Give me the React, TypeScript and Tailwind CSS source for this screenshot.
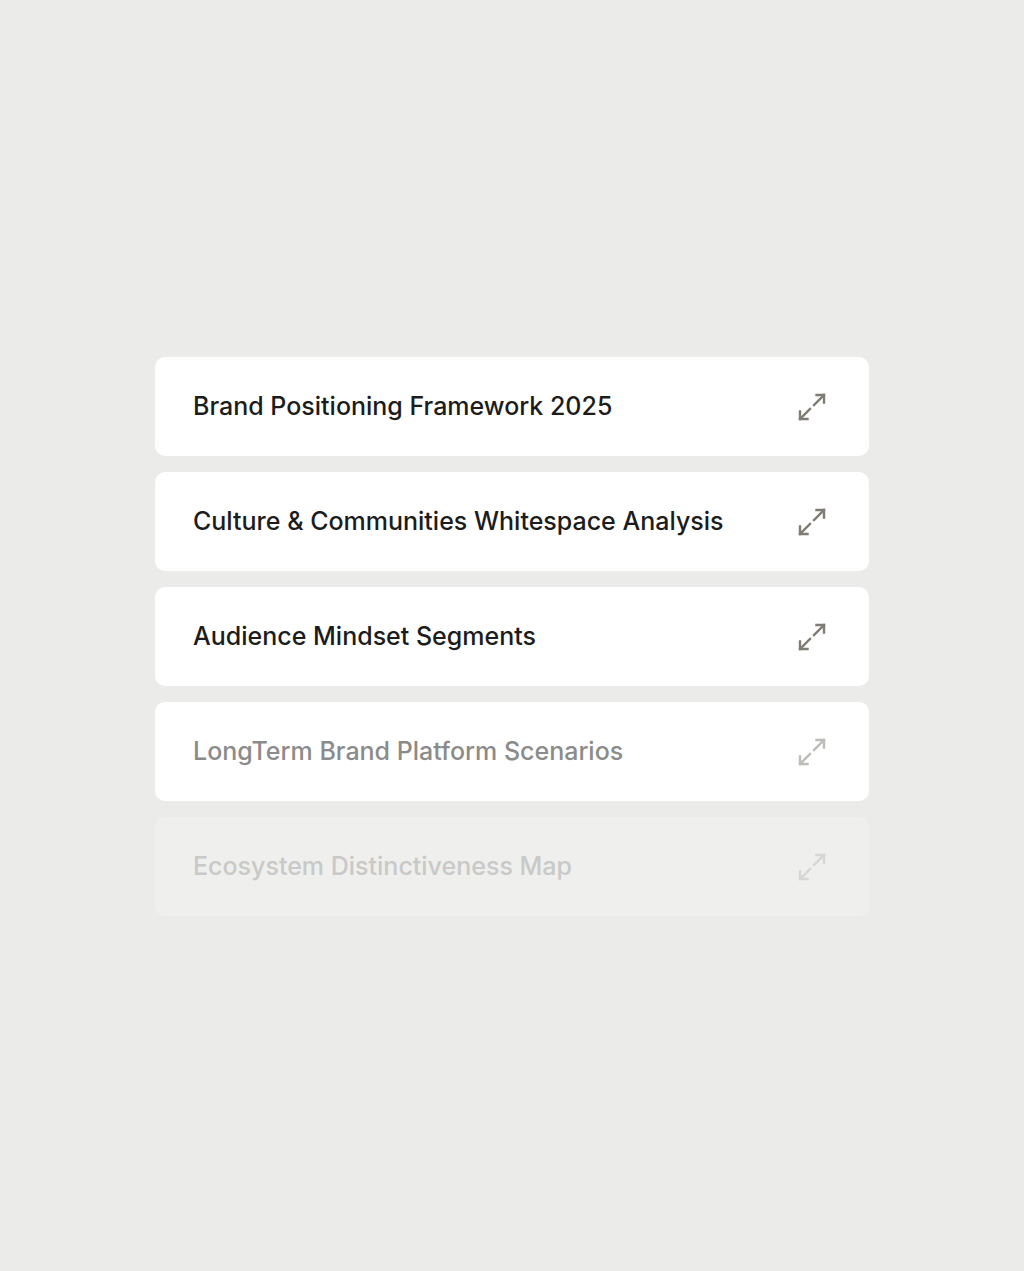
import React from 'react';

type Item = {
  title: string;
  tone: 'full' | 'muted' | 'faded';
};

const items: Item[] = [
  { title: 'Brand Positioning Framework 2025', tone: 'full' },
  { title: 'Culture & Communities Whitespace Analysis', tone: 'full' },
  { title: 'Audience Mindset Segments', tone: 'full' },
  { title: 'LongTerm Brand Platform Scenarios', tone: 'muted' },
  { title: 'Ecosystem Distinctiveness Map', tone: 'faded' },
];

function ExpandIcon({ className }: { className?: string }) {
  return (
    <svg
      viewBox="0 0 28 28"
      width="28"
      height="28"
      fill="none"
      stroke="currentColor"
      strokeWidth="2.4"
      strokeLinecap="square"
      className={className}
    >
      {/* top-right arrow */}
      <path d="M16 12 L26 2" />
      <path d="M18.5 2 H26 V9.5" />
      {/* bottom-left arrow */}
      <path d="M12 16 L2 26" />
      <path d="M2 18.5 V26 H9.5" />
    </svg>
  );
}

export default function App() {
  return (
    <div
      className="min-h-[1271px] w-full bg-[#ebebe9] flex flex-col items-center pt-[357px]"
      style={{ fontFamily: 'Inter, "Noto Sans", sans-serif' }}
    >
      <div className="w-[714px] flex flex-col gap-[16px]">
        {items.map((item) => {
          const card =
            item.tone === 'faded'
              ? 'bg-[#efefee]'
              : 'bg-white';
          const text =
            item.tone === 'full'
              ? 'text-[#1c1c1c]'
              : item.tone === 'muted'
              ? 'text-[#8b8b8b]'
              : 'text-[#c9c9c8]';
          const icon =
            item.tone === 'full'
              ? 'text-[#7f7c74]'
              : item.tone === 'muted'
              ? 'text-[#bdbcb8]'
              : 'text-[#d6d6d4]';
          return (
            <div
              key={item.title}
              className={`h-[99px] rounded-[10px] ${card} flex items-center justify-between pl-[38px] pr-[43px]`}
            >
              <span className={`text-[25px] font-[450] ${text}`}>
                {item.title}
              </span>
              <ExpandIcon className={icon} />
            </div>
          );
        })}
      </div>
    </div>
  );
}
